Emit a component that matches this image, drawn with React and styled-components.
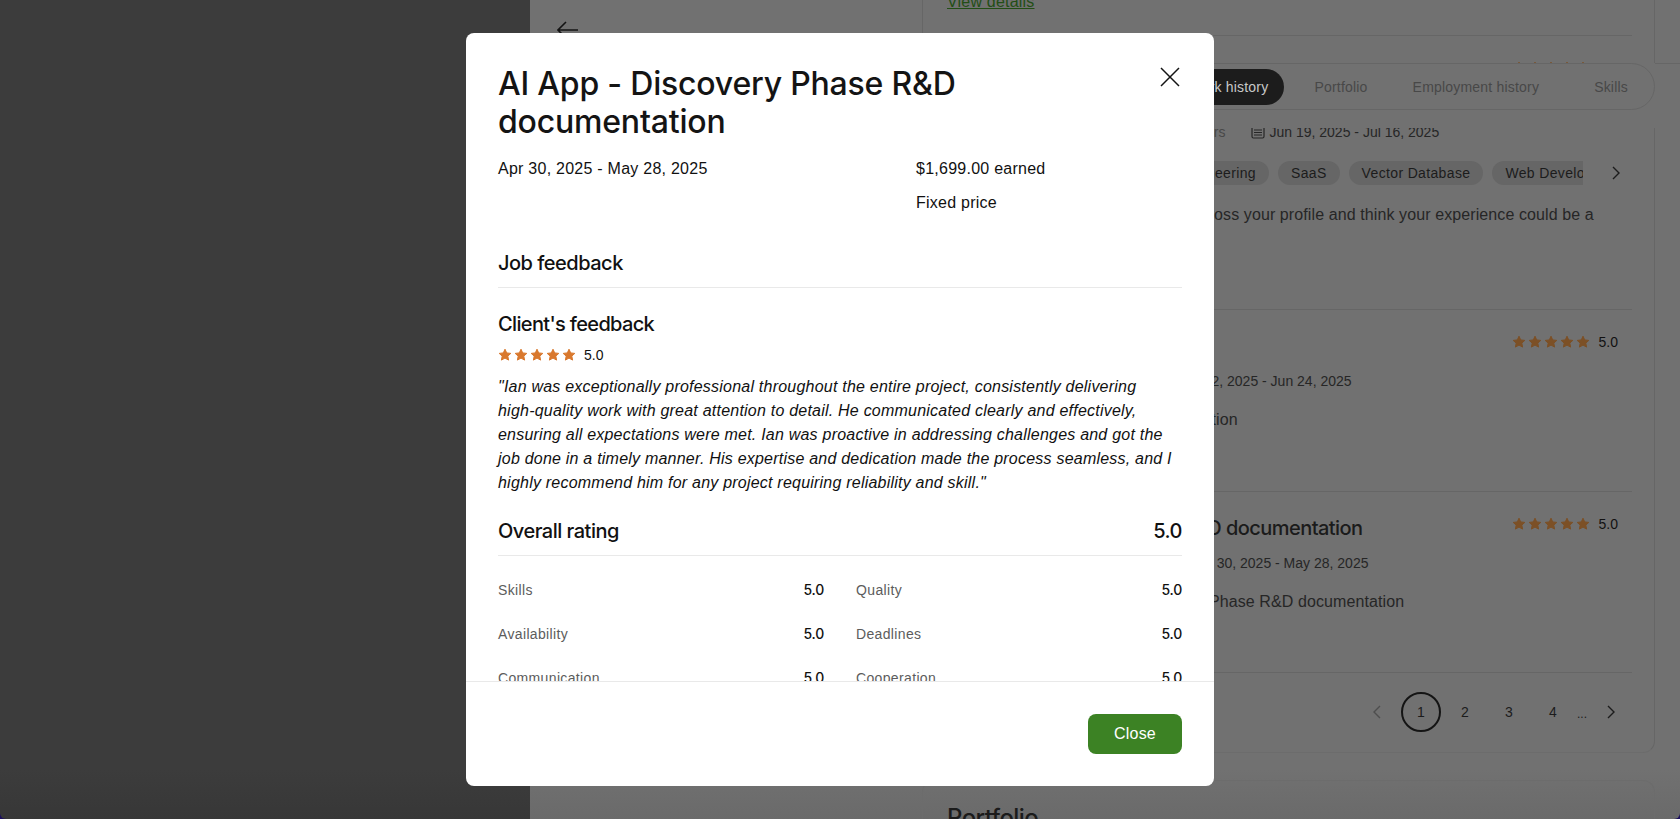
import React from 'react';
import styled, { createGlobalStyle } from 'styled-components';

const GlobalStyle = createGlobalStyle`
  html, body {
    margin: 0;
    padding: 0;
    background: #1b0f5c;
    overflow: hidden;
  }
  * { box-sizing: border-box; }
`;

const bodyFont = `"Liberation Sans", Arial, sans-serif`;
const headFont = `Inter, "Liberation Sans", Arial, sans-serif`;
const pageColor = '#717171';
const lineColor = '#666666';

const Screen = styled.div`
  display: flex;
  width: 1680px;
  height: 819px;
  overflow: hidden;
  border-radius: 0 0 6px 6px;
  font-family: ${bodyFont};
  color: #1c1c1c;
`;

const SidePanel = styled.div`
  width: 530px;
  flex: none;
  background: linear-gradient(to bottom, #3c3c3c 94%, #373737);
`;

const Page = styled.div`
  position: relative;
  flex: 1;
  display: flex;
  background: linear-gradient(to bottom, ${pageColor} 94%, #6a6a6a);
`;

const BackColumn = styled.div`
  width: 392px;
  flex: none;
  padding: 20px 0 0 27px;
`;

const MainColumn = styled.div`
  width: 733px;
  flex: none;
  margin-top: -19px;
`;

const Card = styled.section`
  height: 772px;
  border: 1px solid ${lineColor};
  border-top: 0;
  border-bottom-color: #6c6c6c;
  border-radius: 0 0 12px 12px;
  padding: 0 22px 0 24px;
`;

const DetailsLink = styled.a`
  display: block;
  height: 55px;
  padding-top: 13px;
  font-size: 16px;
  line-height: 16px;
  letter-spacing: 0.2px;
  color: #234e16;
  text-decoration: underline;
  border-bottom: 1px solid ${lineColor};
`;

const JobRow = styled.article`
  height: ${p => p.$height}px;
  padding-top: ${p => p.$pad}px;
  overflow: hidden;
  border-bottom: 1px solid ${lineColor};
`;

const JobHeader = styled.div`
  display: flex;
  justify-content: space-between;
  align-items: flex-start;
  height: 24px;
  padding-right: 14px;
`;

const JobTitle = styled.h3`
  margin: 0;
  font-family: ${headFont};
  font-size: 20px;
  line-height: 24px;
  font-weight: 500;
  letter-spacing: -0.55px;
  white-space: nowrap;
  color: #1b1b1b;
`;

const Rating = styled.div`
  display: flex;
  align-items: center;
  gap: 9px;
  height: 16px;
  font-size: 14px;
  color: #111;
`;

const StarRow = styled.div`
  display: flex;
  gap: 2px;
`;

const JobMeta = styled.div`
  display: flex;
  align-items: center;
  gap: 4px;
  margin-top: ${p => p.$top}px;
  margin-left: ${p => p.$indent}px;
  font-size: 14px;
  line-height: 24px;
  white-space: nowrap;
  color: #262626;
`;

const Hours = styled.span`
  margin-right: 22px;
  color: #484848;
`;

const SkillsRow = styled.div`
  display: flex;
  align-items: center;
  gap: 25px;
  margin-top: 17px;
`;

const SkillsTrack = styled.div`
  display: flex;
  gap: 9px;
  width: 636px;
  padding-left: 14px;
  overflow: hidden;
`;

const Chip = styled.span`
  flex: none;
  height: 24px;
  padding: 0 13px;
  border-radius: 12px;
  background: #666666;
  font-size: 14px;
  line-height: 24px;
  letter-spacing: 0.35px;
  white-space: nowrap;
  color: #1c1c1c;
`;

const JobNote = styled.p`
  margin: ${p => p.$top}px 0 0 ${p => p.$indent}px;
  font-size: 16px;
  line-height: 24px;
  letter-spacing: 0.1px;
  white-space: nowrap;
  color: #262626;
`;

const Pager = styled.nav`
  display: flex;
  justify-content: flex-end;
  align-items: center;
  gap: 4px;
  padding: 19px 1px 0 0;
`;

const PageItem = styled.span`
  display: flex;
  align-items: center;
  justify-content: center;
  width: 40px;
  height: 40px;
  border-radius: 50%;
  border: ${p => p.$current ? '2px solid #141414' : '0'};
  font-size: 14px;
  color: #1c1c1c;
`;

const PageGap = styled.span`
  width: 14px;
  margin: 0 -2px 0 -2px;
  padding-top: 4px;
  font-size: 12px;
  text-align: center;
`;

const PortfolioCard = styled.section`
  margin-top: 27px;
  height: 80px;
  padding: 22px 24px 0;
  border: 1px solid #6c6c6c;
  border-bottom: 0;
  border-radius: 12px 12px 0 0;
`;

const PortfolioTitle = styled.h2`
  margin: 0;
  font-family: ${headFont};
  font-size: 24px;
  line-height: 30px;
  font-weight: 500;
  letter-spacing: -0.6px;
  color: #1b1b1b;
`;

/* sticky profile tabs, they sit over the scrolled card */
const TabsBar = styled.div`
  position: absolute;
  top: 63px;
  left: 392px;
  right: 0;
  height: 65px;
  padding-right: 25px;
  background: ${pageColor};
  &::after {
    content: '';
    position: absolute;
    top: 0;
    right: 0;
    width: 25px;
    height: 1px;
    background: ${lineColor};
  }
`;

const Tabs = styled.div`
  display: flex;
  justify-content: flex-end;
  align-items: center;
  height: 47px;
  border: 1px solid ${lineColor};
  border-radius: 24px;
  padding-right: 26px;
  font-size: 14px;
  letter-spacing: 0.2px;
  color: #484848;
`;

const Tab = styled.span`
  height: 36px;
  line-height: 36px;
  white-space: nowrap;
  margin-left: ${p => p.$gap}px;
  ${p => p.$active && `
    padding: 0 16px;
    border-radius: 18px;
    background: #1c1c1c;
    color: #c8c8c8;
  `}
`;

const Backdrop = styled.div`
  position: fixed;
  inset: 0;
  display: flex;
  align-items: center;
  justify-content: center;
`;

const Modal = styled.div`
  display: flex;
  flex-direction: column;
  width: 748px;
  height: 753px;
  border-radius: 8px;
  background: #fff;
  overflow: hidden;
  font-family: ${bodyFont};
  color: #111;
`;

const ModalBody = styled.div`
  flex: 1;
  min-height: 0;
  overflow: hidden;
  padding: 32px 32px 0;
`;

const ModalHead = styled.div`
  display: flex;
  justify-content: space-between;
  align-items: flex-start;
`;

const ModalTitle = styled.h1`
  width: 500px;
  margin: 0;
  font-family: ${headFont};
  font-size: 32px;
  line-height: 38px;
  font-weight: 500;
  letter-spacing: -0.2px;
  color: #141414;
`;

const CloseIcon = styled.button`
  display: flex;
  padding: 0;
  border: 0;
  background: none;
  color: #141414;
`;

const Facts = styled.div`
  display: grid;
  grid-template-columns: 418px 1fr;
  row-gap: 10px;
  margin-top: 16px;
  font-size: 16px;
  line-height: 24px;
  letter-spacing: 0.25px;
`;

const SectionHead = styled.div`
  display: flex;
  justify-content: space-between;
  margin-top: ${p => p.$top}px;
  padding-bottom: 12px;
  border-bottom: 1px solid #e9e9e9;
  font-family: ${headFont};
  font-size: 20px;
  line-height: 24px;
  font-weight: 500;
  letter-spacing: -0.5px;
`;

const FeedbackTitle = styled.h4`
  margin: 24px 0 0;
  font-family: ${headFont};
  font-size: 20px;
  line-height: 24px;
  font-weight: 500;
  letter-spacing: -0.65px;
`;

const ClientRating = styled.div`
  display: flex;
  align-items: center;
  gap: 8px;
  height: 20px;
  margin-top: 9px;
  font-size: 14px;
`;

const Quote = styled.p`
  margin: 10px 0 0;
  font-size: 16px;
  line-height: 24px;
  font-style: italic;
  letter-spacing: 0.22px;
  white-space: nowrap;
`;

const Scores = styled.div`
  display: grid;
  grid-template-columns: 1fr 1fr;
  gap: 24px 32px;
  margin-top: 24px;
`;

const Score = styled.div`
  display: flex;
  justify-content: space-between;
  font-size: 14px;
  line-height: 20px;
  letter-spacing: 0.35px;
  color: #5c5c5c;
  b {
    font-family: ${headFont};
    font-weight: 500;
    letter-spacing: -0.2px;
    color: #111;
  }
`;

const ModalFooter = styled.div`
  flex: none;
  display: flex;
  justify-content: flex-end;
  padding: 32px;
  border-top: 1px solid #e9e9e9;
`;

const CloseButton = styled.button`
  width: 94px;
  height: 40px;
  border: 0;
  border-radius: 8px;
  background: #3c8224;
  color: #fff;
  font-family: ${bodyFont};
  font-size: 16px;
  letter-spacing: 0.2px;
`;

const Star = ({ color }) => (
  <svg width="14" height="16" viewBox="0 0 14 16">
    <path
      fill={color}
      stroke={color}
      strokeLinejoin="round"
      strokeWidth="1"
      d="M7 2.2l1.7 3.7 4.1.5-3 2.7.8 4L7 11.1l-3.6 2 .8-4-3-2.7 4.1-.5z"
    />
  </svg>
);

const Stars = ({ color }) => (
  <StarRow>
    {[0, 1, 2, 3, 4].map(i => <Star key={i} color={color} />)}
  </StarRow>
);

const Chevron = ({ left, color = '#1c1c1c' }) => (
  <svg width="16" height="16" viewBox="0 0 16 16" fill="none" stroke={color} strokeWidth="1.4">
    <path d={left ? 'M11 2L5 8l6 6' : 'M5 2l6 6-6 6'} />
  </svg>
);

const CalendarIcon = () => (
  <svg width="14" height="14" viewBox="0 0 14 14" fill="none" stroke="#262626" strokeWidth="1.2">
    <rect x="1" y="1.5" width="12" height="11.5" rx="1.5" />
    <path d="M3 5h8M3 7.5h8M3 10h8" />
  </svg>
);

const starColor = '#7c5026';

const scores = ['Skills', 'Quality', 'Availability', 'Deadlines', 'Communication', 'Cooperation'];

const quoteLines = [
  '"Ian was exceptionally professional throughout the entire project, consistently delivering',
  'high-quality work with great attention to detail. He communicated clearly and effectively,',
  'ensuring all expectations were met. Ian was proactive in addressing challenges and got the',
  'job done in a timely manner. His expertise and dedication made the process seamless, and I',
  'highly recommend him for any project requiring reliability and skill."',
];

export default function App() {
  return (
    <>
      <GlobalStyle />
      <Screen>
        <SidePanel />
        <Page>
          <BackColumn>
            <svg width="22" height="22" viewBox="0 0 22 22" fill="none" stroke="#141414" strokeWidth="1.6">
              <path d="M21 10H2M9 2l-8 8 8 8" />
            </svg>
          </BackColumn>
          <MainColumn>
            <Card>
              <DetailsLink>View details</DetailsLink>
              <JobRow $height={274} $pad={24}>
                <JobHeader>
                  <JobTitle>Invitation to interview</JobTitle>
                  <Rating>
                    <Stars color={starColor} />
                    5.0
                  </Rating>
                </JobHeader>
                <JobMeta $top={36} $indent={224}>
                  <Hours>42 hours</Hours>
                  <CalendarIcon />
                  <span>Jun 19, 2025 - Jul 16, 2025</span>
                </JobMeta>
                <SkillsRow>
                  <SkillsTrack>
                    <Chip>Machine Learning</Chip>
                    <Chip>Prompt Engineering</Chip>
                    <Chip>SaaS</Chip>
                    <Chip>Vector Database</Chip>
                    <Chip>Web Development</Chip>
                  </SkillsTrack>
                  <Chevron />
                </SkillsRow>
                <JobNote $top={18} $indent={172}>We came across your profile and think your experience could be a</JobNote>
              </JobRow>
              <JobRow $height={182} $pad={24}>
                <JobHeader>
                  <JobTitle>Technical consultation</JobTitle>
                  <Rating>
                    <Stars color={starColor} />
                    5.0
                  </Rating>
                </JobHeader>
                <JobMeta $top={11} $indent={238}>
                  <span>Jun 2, 2025 - Jun 24, 2025</span>
                </JobMeta>
                <JobNote $top={15} $indent={132}>Technical consultation</JobNote>
              </JobRow>
              <JobRow $height={181} $pad={24}>
                <JobHeader>
                  <JobTitle>AI App - Discovery Phase R&amp;D documentation</JobTitle>
                  <Rating>
                    <Stars color={starColor} />
                    5.0
                  </Rating>
                </JobHeader>
                <JobMeta $top={11} $indent={244}>
                  <span>Apr 30, 2025 - May 28, 2025</span>
                </JobMeta>
                <JobNote $top={15} $indent={124}>AI App - Discovery Phase R&amp;D documentation</JobNote>
              </JobRow>
              <Pager>
                <PageItem><Chevron left color="#4e4e4e" /></PageItem>
                <PageItem $current>1</PageItem>
                <PageItem>2</PageItem>
                <PageItem>3</PageItem>
                <PageItem>4</PageItem>
                <PageGap>...</PageGap>
                <PageItem><Chevron /></PageItem>
              </Pager>
            </Card>
            <PortfolioCard>
              <PortfolioTitle>Portfolio</PortfolioTitle>
            </PortfolioCard>
          </MainColumn>
          <TabsBar>
            <Tabs>
              <Tab $active>Work history</Tab>
              <Tab $gap={30}>Portfolio</Tab>
              <Tab $gap={45}>Employment history</Tab>
              <Tab $gap={55}>Skills</Tab>
            </Tabs>
          </TabsBar>
        </Page>
      </Screen>
      <Backdrop>
        <Modal>
          <ModalBody>
            <ModalHead>
              <ModalTitle>AI App - Discovery Phase R&amp;D documentation</ModalTitle>
              <CloseIcon aria-label="Close">
                <svg width="24" height="24" viewBox="0 0 24 24" fill="none" stroke="currentColor" strokeWidth="1.5">
                  <path d="M3 3l18 18M21 3L3 21" />
                </svg>
              </CloseIcon>
            </ModalHead>
            <Facts>
              <span>Apr 30, 2025 - May 28, 2025</span>
              <span>$1,699.00 earned</span>
              <span />
              <span>Fixed price</span>
            </Facts>
            <SectionHead $top={36}>Job feedback</SectionHead>
            <FeedbackTitle>Client's feedback</FeedbackTitle>
            <ClientRating>
              <Stars color="#d9782d" />
              5.0
            </ClientRating>
            <Quote>
              {quoteLines.map(line => <React.Fragment key={line}>{line}<br /></React.Fragment>)}
            </Quote>
            <SectionHead $top={24}>
              <span>Overall rating</span>
              <span>5.0</span>
            </SectionHead>
            <Scores>
              {scores.map(label => (
                <Score key={label}>
                  <span>{label}</span>
                  <b>5.0</b>
                </Score>
              ))}
            </Scores>
          </ModalBody>
          <ModalFooter>
            <CloseButton>Close</CloseButton>
          </ModalFooter>
        </Modal>
      </Backdrop>
    </>
  );
}
